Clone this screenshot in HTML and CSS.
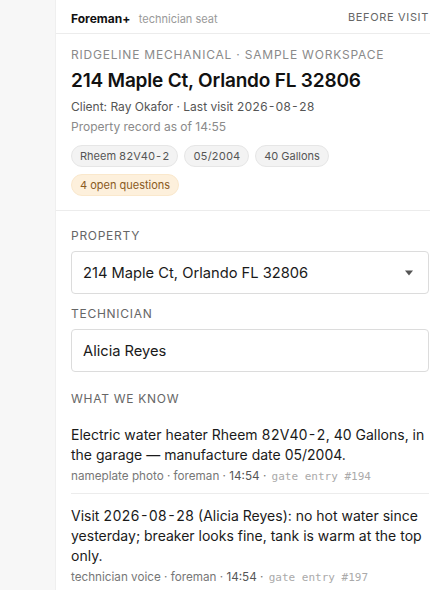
FILE: index.html
```html
<!DOCTYPE html>
<html lang="en">
<head>
    <meta charset="UTF-8">
    <meta name="viewport" content="width=device-width, initial-scale=1.0">
    <title>Foreman+ — before visit</title>
    <link rel="stylesheet" href="styles.css">
</head>
<body>
    <div class="seat">
        <div class="topbar">
            <div class="brand">
                <span class="brand-name">Foreman+</span>
                <span class="brand-sub">technician seat</span>
            </div>
            <div class="stage">BEFORE VISIT</div>
        </div>

        <div class="summary">
            <div class="eyebrow">RIDGELINE MECHANICAL · SAMPLE WORKSPACE</div>
            <h1 class="address">214 Maple Ct, Orlando FL 32806</h1>
            <div class="client">Client: Ray Okafor · Last visit <span class="num">2026-08-28</span></div>
            <div class="asof">Property record as of 14:55</div>
            <div class="chips chips-facts">
                <span class="chip num">Rheem 82V40-2</span>
                <span class="chip num">05/2004</span>
                <span class="chip">40 Gallons</span>
            </div>
            <div class="chips">
                <span class="chip chip-warn">4 open questions</span>
            </div>
        </div>

        <div class="form">
            <div class="field-label">PROPERTY</div>
            <div class="select">
                <span>214 Maple Ct, Orlando FL 32806</span>
                <svg class="caret" width="10" height="6" viewBox="0 0 10 6"><path d="M1 0.5h8L5 5.5z" fill="#555"/></svg>
            </div>

            <label class="field-label" for="tech">TECHNICIAN</label>
            <input class="input" id="tech" type="text" value="Alicia Reyes">

            <div class="field-label known-label">WHAT WE KNOW</div>
            <div class="facts">
                <div class="fact">
                    <p class="fact-text">Electric water heater Rheem <span class="num">82V40-2</span>, 40 Gallons, in the garage — manufacture date 05/2004.</p>
                    <div class="fact-meta">nameplate photo · foreman · <span class="time">14:54</span> · <code>gate entry #194</code></div>
                </div>
                <div class="fact">
                    <p class="fact-text">Visit <span class="num">2026-08-28</span> (Alicia Reyes): no hot water since yesterday; breaker looks fine, tank is warm at the top only.</p>
                    <div class="fact-meta">technician voice · foreman · <span class="time">14:54</span> · <code>gate entry #197</code></div>
                </div>
            </div>
        </div>
    </div>
</body>
</html>
```

FILE: styles.css
```css
html, body {
    margin: 0;
    height: 100%;
}

body {
    background-color: #f7f7f7;
    font-family: Inter, "Noto Sans", sans-serif;
    color: #1a1a1a;
    overflow: hidden;
}

.seat {
    width: 390px;
    min-height: 100%;
    margin-left: 55px;
    background-color: #fff;
    border-left: 1px solid #efefef;
    box-sizing: border-box;
}

.num {
    font-variant-numeric: tabular-nums;
}

.topbar {
    display: flex;
    justify-content: space-between;
    align-items: center;
    height: 33px;
    padding: 0 16px 0 15px;
    border-bottom: 1px solid #ececec;
}

.brand-name {
    font-size: 12px;
    font-weight: 700;
    color: #111;
}

.brand-sub {
    font-size: 11px;
    color: #999;
    margin-left: 4px;
}

.stage {
    font-size: 11px;
    letter-spacing: 0.06em;
    color: #666;
}

.summary {
    padding: 13px 16px 14px 15px;
    border-bottom: 1px solid #ececec;
}

.eyebrow {
    font-size: 12px;
    letter-spacing: 0.066em;
    color: #8a8a8a;
    line-height: 16px;
}

.address {
    margin: 6px 0 0;
    font-size: 19px;
    font-weight: 600;
    line-height: 24px;
    letter-spacing: -0.01em;
    color: #111;
}

.client {
    margin-top: 6px;
    font-size: 12px;
    line-height: 16px;
    color: #555;
}

.asof {
    margin-top: 4px;
    font-size: 12px;
    line-height: 16px;
    color: #8a8a8a;
}

.chips {
    display: flex;
    gap: 6px;
    margin-top: 7px;
}

.chips-facts {
    margin-top: 10px;
}

.chip {
    display: inline-block;
    padding: 3px 8px;
    font-size: 11px;
    line-height: 14px;
    color: #555;
    background-color: #f3f3f3;
    border: 1px solid #e6e6e6;
    border-radius: 11px;
}

.chip-warn {
    background-color: #fdf0dc;
    border-color: #fae8cc;
    color: #8a5a1e;
}

.form {
    padding: 17px 16px 0 15px;
}

.field-label {
    display: block;
    font-size: 12px;
    letter-spacing: 0.06em;
    line-height: 16px;
    color: #666;
    margin-bottom: 7px;
}

.select,
.input {
    display: flex;
    align-items: center;
    justify-content: space-between;
    width: 100%;
    height: 43px;
    box-sizing: border-box;
    padding: 0 12px 0 11px;
    font-family: inherit;
    font-size: 14.7px;
    color: #1a1a1a;
    background-color: #fff;
    border: 1px solid #dcdcdc;
    border-radius: 4px;
    margin-bottom: 12px;
}

.input {
    outline: none;
    margin-bottom: 19px;
}

.caret {
    margin-right: 2px;
}

.known-label {
    margin-bottom: 10px;
}

.fact {
    padding: 12px 0 8px;
    border-bottom: 1px solid #ececec;
}

.fact:first-child {
    padding-top: 8px;
}

.fact-text {
    margin: 0;
    font-size: 14px;
    line-height: 20px;
    color: #1a1a1a;
}

.fact-meta {
    margin-top: 3px;
    font-size: 11.7px;
    line-height: 16px;
    color: #777;
}

.fact-meta .time {
    color: #555;
}

.fact-meta code {
    font-family: "DejaVu Sans Mono", monospace;
    font-size: 11px;
    color: #aaa;
    margin-left: 2px;
}
```
